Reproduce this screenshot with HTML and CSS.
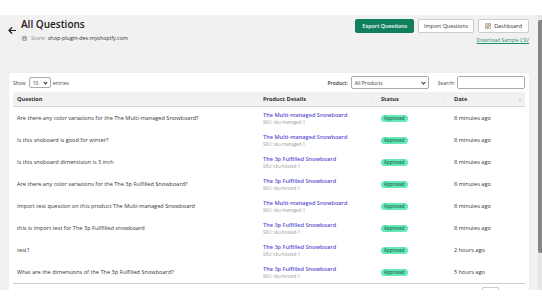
FILE: index.html
```html
<!DOCTYPE html>
<html lang="en">
<head>
    <meta http-equiv="Content-Type" content="text/html; charset=utf-8" />
    <title>All Questions</title>
    <link rel="stylesheet" href="styles.css">
</head>
<body>
<div class="frame">
    <div class="page">
        <div class="topbar">
            <div class="title-block">
                <a class="back" href="#">
                    <svg width="8" height="7" viewBox="0 0 16 14"><path d="M15 7H2.5M7.5 1.5L2 7l5.5 5.5" fill="none" stroke="#222" stroke-width="2.4" stroke-linecap="round" stroke-linejoin="round"/></svg>
                </a>
                <div>
                    <h1>All Questions</h1>
                    <p class="store">
                        <svg width="5" height="5" viewBox="0 0 10 10"><path d="M1.5 1.5h7v7h-7zM1.5 4h7" fill="none" stroke="#6d6d6d" stroke-width="1.4"/></svg>
                        <span class="muted">Store:</span> shop-plugin-dev.myshopify.com
                    </p>
                </div>
            </div>
            <div class="actions">
                <div class="btn-row">
                    <button class="btn btn-green">Export Questions</button>
                    <button class="btn btn-import">Import Questions</button>
                    <button class="btn">
                        <svg width="6" height="6" viewBox="0 0 12 12"><rect x="1" y="1" width="4" height="4" rx="1" fill="none" stroke="#b0702c" stroke-width="1.2"/><rect x="7" y="1" width="4" height="4" rx="1" fill="none" stroke="#555" stroke-width="1.2"/><rect x="1" y="7" width="4" height="4" rx="1" fill="none" stroke="#555" stroke-width="1.2"/><rect x="7" y="7" width="4" height="4" rx="1" fill="none" stroke="#b0702c" stroke-width="1.2"/></svg>
                        Dashboard
                    </button>
                </div>
                <a class="csv-link" href="#">Download Sample CSV</a>
            </div>
        </div>

        <div class="card">
            <div class="controls">
                <div class="length">
                    Show <span class="select select-small">10 <i class="chev"></i></span> entries
                </div>
                <div class="filters">
                    <span class="filter-label">Product:</span>
                    <span class="select select-wide">All Products <i class="chev"></i></span>
                    <span class="search-label">Search:</span>
                    <input class="search" type="text">
                </div>
            </div>

            <table class="questions">
                <colgroup>
                    <col style="width:246px"><col style="width:118px"><col style="width:73px"><col style="width:75px">
                </colgroup>
                <thead>
                    <tr>
                        <th><div class="th-inner">Question <span class="sort"><i class="up"></i><i class="down"></i></span></div></th>
                        <th><div class="th-inner">Product Details <span class="sort"><i class="up"></i><i class="down"></i></span></div></th>
                        <th><div class="th-inner">Status <span class="sort"><i class="up"></i><i class="down"></i></span></div></th>
                        <th><div class="th-inner">Date <span class="sort sorted"><i class="up"></i><i class="down"></i></span></div></th>
                    </tr>
                </thead>
                <tbody>
                    <tr>
                        <td>Are there any color variations for the The Multi-managed Snowboard?</td>
                        <td><a class="product" href="#">The Multi-managed Snowboard</a><span class="sku">SKU: sku-managed-1</span></td>
                        <td><span class="badge">Approved</span></td>
                        <td class="date">8 minutes ago</td>
                    </tr>
                    <tr>
                        <td>Is this snoboard is good for winter?</td>
                        <td><a class="product" href="#">The Multi-managed Snowboard</a><span class="sku">SKU: sku-managed-1</span></td>
                        <td><span class="badge">Approved</span></td>
                        <td class="date">8 minutes ago</td>
                    </tr>
                    <tr>
                        <td>Is this snoboard dimentision is 3 inch</td>
                        <td><a class="product" href="#">The 3p Fulfilled Snowboard</a><span class="sku">SKU: sku-hosted-1</span></td>
                        <td><span class="badge">Approved</span></td>
                        <td class="date">8 minutes ago</td>
                    </tr>
                    <tr>
                        <td>Are there any color variations for the The 3p Fulfilled Snowboard?</td>
                        <td><a class="product" href="#">The 3p Fulfilled Snowboard</a><span class="sku">SKU: sku-hosted-1</span></td>
                        <td><span class="badge">Approved</span></td>
                        <td class="date">8 minutes ago</td>
                    </tr>
                    <tr>
                        <td>Import test question on this product The Multi-managed Snowboard</td>
                        <td><a class="product" href="#">The Multi-managed Snowboard</a><span class="sku">SKU: sku-managed-1</span></td>
                        <td><span class="badge">Approved</span></td>
                        <td class="date">8 minutes ago</td>
                    </tr>
                    <tr>
                        <td>this is import test for The 3p Fullfilled snowboard</td>
                        <td><a class="product" href="#">The 3p Fulfilled Snowboard</a><span class="sku">SKU: sku-hosted-1</span></td>
                        <td><span class="badge">Approved</span></td>
                        <td class="date">8 minutes ago</td>
                    </tr>
                    <tr>
                        <td>test1</td>
                        <td><a class="product" href="#">The 3p Fulfilled Snowboard</a><span class="sku">SKU: sku-hosted-1</span></td>
                        <td><span class="badge">Approved</span></td>
                        <td class="date">2 hours ago</td>
                    </tr>
                    <tr>
                        <td>What are the dimensions of the The 3p Fulfilled Snowboard?</td>
                        <td><a class="product" href="#">The 3p Fulfilled Snowboard</a><span class="sku">SKU: sku-hosted-1</span></td>
                        <td><span class="badge">Approved</span></td>
                        <td class="date">5 hours ago</td>
                    </tr>
                </tbody>
            </table>
            <div class="table-footer">
                <span class="page-box"></span>
            </div>
        </div>
    </div>
    <div class="scrollbar"><div class="thumb"></div></div>
</div>
</body>
</html>
```

FILE: styles.css
```css
body {
    margin: 0;
    background-color: #ffffff;
    font-family: "Open Sans", Arial, sans-serif;
    color: #303030;
}

.frame {
    display: flex;
    height: 275px;
    margin-top: 15px;
    background-color: #f1f1f2;
    overflow: hidden;
}

.page {
    flex: 1;
    padding: 0 9px;
}

.scrollbar {
    width: 5px;
    padding-top: 5px;
    background-color: #e6e6e6;
}

.scrollbar .thumb {
    height: 233px;
    background-color: #858585;
    border-radius: 2px 0 0 2px;
}

/* header */
.topbar {
    display: flex;
    justify-content: space-between;
    align-items: flex-start;
    height: 58px;
    box-sizing: border-box;
    padding-top: 3px;
}

.title-block {
    display: flex;
    align-items: center;
    gap: 5px;
    margin-left: -1px;
}

.back {
    display: flex;
    margin-top: 1px;
}

h1 {
    margin: 0;
    font-size: 10px;
    line-height: 13px;
    font-weight: 600;
    color: #202020;
}

.store {
    display: flex;
    align-items: center;
    gap: 2px;
    margin: 3px 0 0 1px;
    font-size: 5.4px;
    line-height: 8px;
    color: #303030;
}

.store svg {
    margin-right: 2px;
}

.muted {
    color: #8a8a8a;
}

.actions {
    display: flex;
    flex-direction: column;
    align-items: flex-end;
    margin-top: 1px;
}

.btn-row {
    display: flex;
    gap: 4px;
}

.btn {
    display: flex;
    align-items: center;
    gap: 3px;
    height: 14px;
    padding: 0 6px;
    font-family: inherit;
    font-size: 5.4px;
    color: #303030;
    background-color: #ffffff;
    border: 1px solid #c9cccf;
    border-radius: 2px;
    cursor: pointer;
}

.btn-import {
    padding: 0 5px;
}

.btn-green {
    background-color: #0f7f5e;
    border-color: #0f7f5e;
    color: #ffffff;
    font-weight: 600;
}

.csv-link {
    margin-top: 4px;
    font-size: 5px;
    line-height: 7px;
    color: #1c8d6b;
    text-decoration: underline;
}

/* card */
.card {
    padding: 2px 4px 0;
    background-color: #ffffff;
    border-radius: 2px;
    box-shadow: 0 0 1px rgba(0, 0, 0, 0.12);
    height: 240px;
}

.controls {
    display: flex;
    justify-content: space-between;
    align-items: center;
    height: 15px;
    font-size: 5px;
    color: #444;
}

.length, .filters {
    display: flex;
    align-items: center;
}

.select {
    display: flex;
    align-items: center;
    justify-content: space-between;
    box-sizing: border-box;
    padding: 0 2px 0 3px;
    border: 1px solid #aaaaaa;
    border-radius: 2px;
    font-size: 5px;
    color: #333;
}

.select-small {
    width: 22px;
    height: 11px;
    margin: 0 2px 0 3px;
}

.select-wide {
    width: 78px;
    height: 13px;
}

.chev {
    width: 2px;
    height: 2px;
    margin: 0 1px 1px 0;
    border-right: 1px solid #222;
    border-bottom: 1px solid #222;
    transform: rotate(45deg);
}

.filter-label {
    margin-right: 3px;
    font-weight: 600;
    color: #333;
}

.search-label {
    margin: 0 2px 0 9px;
}

.search {
    width: 68px;
    height: 13px;
    box-sizing: border-box;
    margin: 0;
    padding: 0;
    border: 1px solid #aaaaaa;
    border-radius: 2px;
}

/* table */
.questions {
    width: 100%;
    margin-top: 2px;
    border-collapse: collapse;
    table-layout: fixed;
    font-size: 5.6px;
}

.questions th {
    height: 14px;
    padding: 0 4px;
    text-align: left;
    font-weight: 700;
    color: #303030;
    background-color: #f1f1f1;
    border-bottom: 1px solid #d6d6d6;
}

.th-inner {
    display: flex;
    justify-content: space-between;
    align-items: center;
}

.sort {
    display: flex;
    flex-direction: column;
    gap: 1px;
}

.sort i {
    width: 0;
    height: 0;
    border-left: 1.5px solid transparent;
    border-right: 1.5px solid transparent;
}

.sort .up {
    border-bottom: 1.5px solid #d9d9d9;
}

.sort .down {
    border-top: 1.5px solid #d9d9d9;
}

.sort.sorted .down {
    border-top-color: #777;
}

.questions td {
    height: 22px;
    padding: 0 4px;
    color: #333;
    white-space: nowrap;
}

.questions tbody tr:last-child td {
    border-bottom: 1px solid #cfcfcf;
}

.product {
    display: block;
    font-weight: 600;
    line-height: 7px;
    color: #5a4fcf;
    text-decoration: none;
}

.sku {
    display: block;
    font-size: 4.4px;
    line-height: 6px;
    color: #9a9a9a;
}

.badge {
    display: inline-block;
    padding: 0 3px;
    font-size: 4.4px;
    line-height: 7px;
    font-weight: 600;
    color: #1d6b4c;
    background-color: #66e8b8;
    border-radius: 4px;
}

.date {
    color: #4a4a4a;
}

.table-footer {
    display: flex;
    justify-content: flex-end;
    padding: 3px 26px 0 0;
}

.page-box {
    width: 15px;
    height: 10px;
    border: 1px solid #cccccc;
    border-radius: 1px;
}
```
